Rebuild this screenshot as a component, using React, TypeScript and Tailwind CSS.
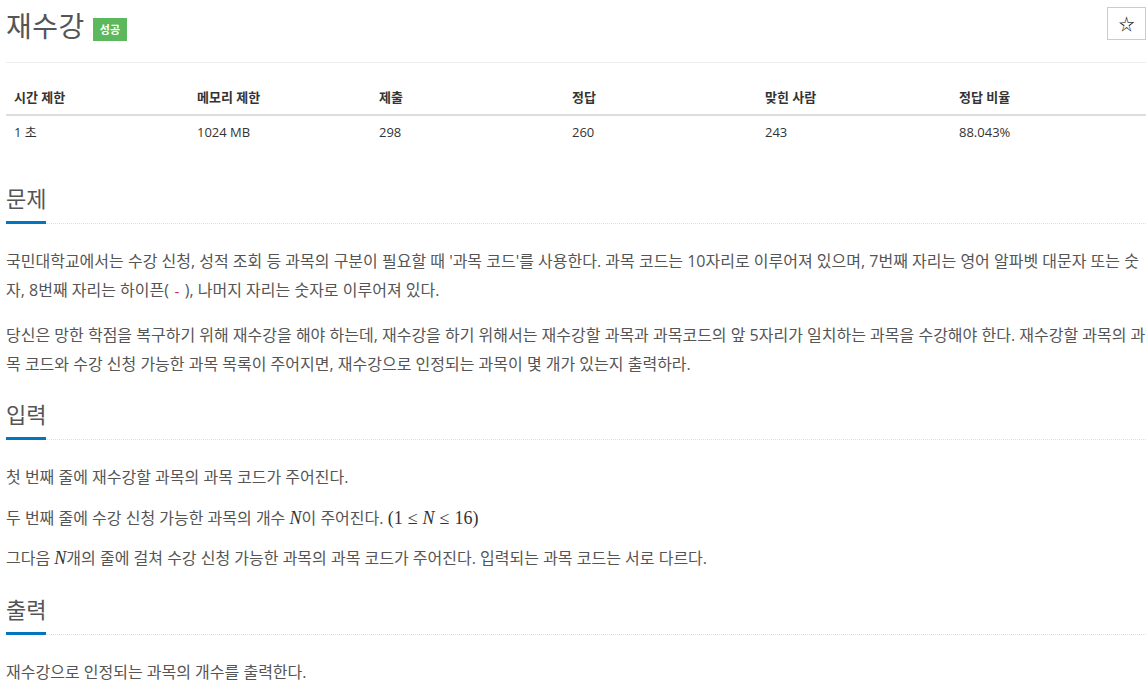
import React from "react";

const font = { fontFamily: '"Open Sans", "Noto Sans CJK KR", sans-serif' };

function Math({ children }: { children: React.ReactNode }) {
  return (
    <span className="font-['Liberation_Serif','DejaVu_Serif',serif] text-[18px] text-[#333]">
      {children}
    </span>
  );
}

function Headline({ title }: { title: string }) {
  return (
    <div className="border-b border-dotted border-[#ddd] mb-[23px]">
      <h2 className="inline-block text-[22px] leading-[30px] text-[#555] pb-[8px] border-b-[3px] border-[#0076c0] -mb-px">
        {title}
      </h2>
    </div>
  );
}

const stats = [
  ["시간 제한", "1 초"],
  ["메모리 제한", "1024 MB"],
  ["제출", "298"],
  ["정답", "260"],
  ["맞힌 사람", "243"],
  ["정답 비율", "88.043%"],
];

export default function App() {
  return (
    <div className="min-h-screen bg-white pl-[6px] pr-px pt-[6px] text-[#555]" style={font}>
      <div className="flex items-start justify-between border-b border-[#eee] pb-[19px]">
        <div className="flex items-center gap-[8px] pt-[3px]">
          <h1 className="text-[28px] leading-[34px] tracking-[0.5px] text-[#555]">재수강</h1>
          <span className="mt-[6px] bg-[#5cb85c] text-white text-[11px] font-bold px-[7px] py-[3px] leading-[17px]">
            성공
          </span>
        </div>
        <button className="mt-px w-[39px] h-[33px] border border-[#ccc] bg-white flex items-center justify-center text-[16px] text-[#111]">
          ☆
        </button>
      </div>

      <div className="mt-[17px] text-[13px]">
        <div className="grid grid-cols-[183px_182px_193px_193px_194px_1fr] border-b-2 border-[#ddd] font-bold text-[#333]">
          {stats.map(([h]) => (
            <div key={h} className="px-[8px] py-[7px] leading-[20px]">
              {h}
            </div>
          ))}
        </div>
        <div className="grid grid-cols-[183px_182px_193px_193px_194px_1fr] text-[#333]">
          {stats.map(([h, v]) => (
            <div key={h} className="px-[8px] py-[6px] leading-[20px]">
              {v}
            </div>
          ))}
        </div>
      </div>

      <section className="mt-[35px]">
        <Headline title="문제" />
        <div className="text-[16px] leading-[29px] break-all">
          <p className="mb-[14px]">
            국민대학교에서는 수강 신청, 성적 조회 등 과목의 구분이 필요할 때 '과목 코드'를 사용한다. 과목 코드는 10자리로 이루어져 있으며, 7번째 자리는 영어 알파벳 대문자 또는 숫자, 8번째 자리는 하이픈(
            <code className="text-[#c7254e] px-[4px] font-['Liberation_Mono',monospace] text-[13px]">-</code>
            ), 나머지 자리는 숫자로 이루어져 있다.
          </p>
          <p>
            당신은 망한 학점을 복구하기 위해 재수강을 해야 하는데, 재수강을 하기 위해서는 재수강할 과목과 과목코드의 앞 5자리가 일치하는 과목을 수강해야 한다. 재수강할 과목의 과목 코드와 수강 신청 가능한 과목 목록이 주어지면, 재수강으로 인정되는 과목이 몇 개가 있는지 출력하라.
          </p>
        </div>
      </section>

      <section className="mt-[20px]">
        <Headline title="입력" />
        <div className="text-[16px] leading-[29px] break-all">
          <p className="mb-[12px]">첫 번째 줄에 재수강할 과목의 과목 코드가 주어진다.</p>
          <p className="mb-[11px]">
            두 번째 줄에 수강 신청 가능한 과목의 개수 <Math><i>N</i></Math>이 주어진다.{" "}
            <Math>
              (1<span className="mx-[5px]">≤</span><i>N</i><span className="mx-[5px]">≤</span>16)
            </Math>
          </p>
          <p>
            그다음 <Math><i>N</i></Math>개의 줄에 걸쳐 수강 신청 가능한 과목의 과목 코드가 주어진다. 입력되는 과목 코드는 서로 다르다.
          </p>
        </div>
      </section>

      <section className="mt-[21px]">
        <Headline title="출력" />
        <div className="text-[16px] leading-[29px] break-all">
          <p>재수강으로 인정되는 과목의 개수를 출력한다.</p>
        </div>
      </section>
    </div>
  );
}
